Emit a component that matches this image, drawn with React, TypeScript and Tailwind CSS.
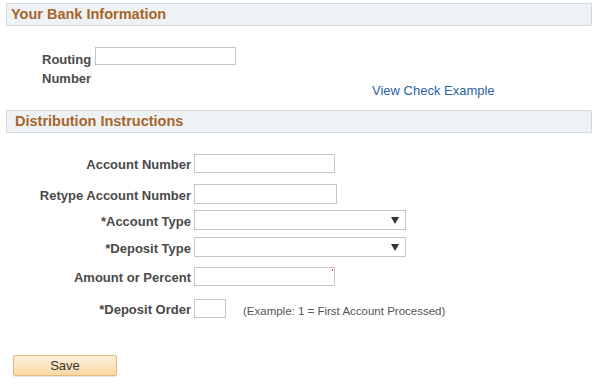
const font = { fontFamily: '"Liberation Sans", Arial, sans-serif' }

function SectionHeader({ title, indent }: { title: string; indent: string }) {
    return (
        <div className={`mx-[6px] flex h-[23px] w-[586px] items-center border border-[#d3d9de] bg-[#eef2f4] text-[14.5px] font-bold text-[#a8652a] ${indent}`}>
            {title}
        </div>
    )
}

function Field({ label, width, height, top, children }: { label: string; width: number; height: number; top: string; children?: React.ReactNode }) {
    return (
        <div className={`flex items-center ${top}`}>
            <label className="w-[191px] pt-[2px] text-right text-[13px] font-bold leading-[15px] text-[#4a4a4a]">{label}</label>
            <div
                className="relative ml-[3px] border border-[#c6c6c6] bg-white"
                style={{ width, height }}
            >
                {children}
            </div>
        </div>
    )
}

function Arrow() {
    return (
        <svg className="absolute right-[6px] top-[6px]" width="8" height="7" viewBox="0 0 8 7">
            <path d="M0 0 H8 L4 7 Z" fill="#333" />
        </svg>
    )
}

export default function App() {
    return (
        <div className="min-h-[392px] w-[607px] bg-white pt-[3px]" style={font}>
            <SectionHeader title="Your Bank Information" indent="pl-[4px]" />

            <div className="mt-[21px] flex h-[35px] items-start pl-[42px]">
                <label className="w-[52px] pt-[3px] text-[13px] font-bold leading-[19px] text-[#4a4a4a]">Routing Number</label>
                <div className="ml-[1px] h-[18px] w-[141px] border border-[#c6c6c6] bg-white" />
            </div>
            <div className="mt-[2px] pl-[372px] text-[13px] leading-[14px]">
                <a href="#" className="text-[#2c61a6]">View Check Example</a>
            </div>

            <div className="mt-[12px]">
                <SectionHeader title="Distribution Instructions" indent="pl-[8px]" />
            </div>

            <div className="mt-[21px]">
                <Field label="Account Number" width={141} height={19} top="" />
                <Field label="Retype Account Number" width={143} height={20} top="mt-[11px]" />
                <Field label="*Account Type" width={212} height={20} top="mt-[6px]">
                    <Arrow />
                </Field>
                <Field label="*Deposit Type" width={212} height={20} top="mt-[7px]">
                    <Arrow />
                </Field>
                <Field label="Amount or Percent" width={141} height={19} top="mt-[10px]">
                    <span className="absolute right-[1px] top-[1px] h-[2px] w-[1px] bg-[#e03a3a]" />
                </Field>
                <div className="mt-[11px] flex items-center">
                    <label className="w-[191px] pt-[2px] text-right text-[13px] font-bold leading-[15px] text-[#4a4a4a]">*Deposit Order</label>
                    <div className="ml-[3px] h-[19px] w-[32px] border border-[#c6c6c6] bg-white" />
                    <span className="ml-[17px] pt-[6px] text-[11.5px] text-[#555]">(Example: 1 = First Account Processed)</span>
                </div>
            </div>

            <div className="mt-[33px] pl-[13px]">
                <button
                    type="button"
                    className="h-[21px] w-[104px] rounded-[2px] border border-[#e6b77c] bg-gradient-to-b from-[#fdf0d8] to-[#f9d9a6] text-[13px] text-[#333] shadow-[0_1px_1px_rgba(0,0,0,0.1)]"
                >
                    Save
                </button>
            </div>
        </div>
    )
}
